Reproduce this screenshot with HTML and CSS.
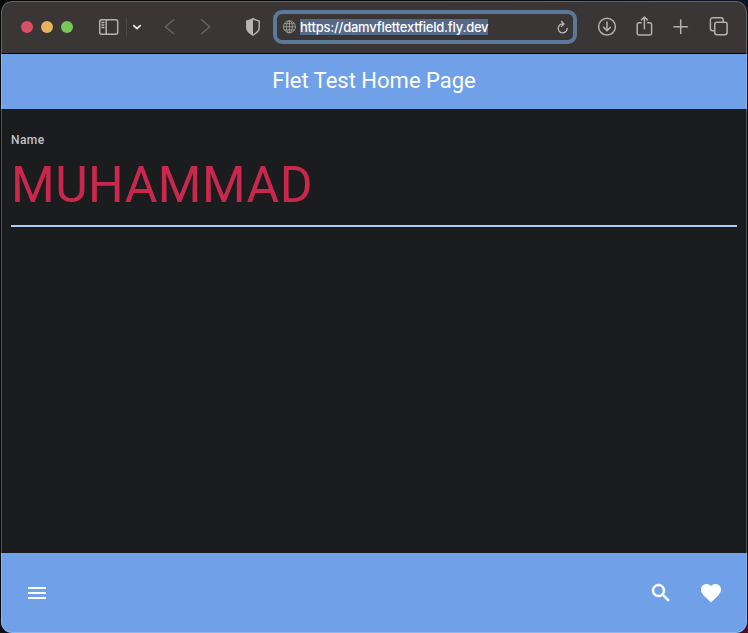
FILE: index.html
```html
<!DOCTYPE html>
<html lang="en">
<head>
<meta charset="utf-8">
<title>Flet Test Home Page</title>
<link rel="stylesheet" href="styles.css">
</head>
<body>
<div class="window">
  <header class="toolbar">
    <div class="lights"><i class="light close"></i><i class="light minimize"></i><i class="light zoom"></i></div>
    <svg class="icon sidebar" viewBox="0 0 24 24"><rect x="2.700" y="4.700" width="18" height="14.600" rx="2"/><path d="M9.200 5v14M4.900 7.600h2M4.900 10h2M4.900 12.400h2"/></svg>
    <span class="divider"></span>
    <svg class="icon chevron" viewBox="0 0 12 24"><path d="M2.800 10.700 6 13.600l3.200-2.900"/></svg>
    <svg class="icon dim back" viewBox="0 0 24 24"><path d="m15.700 4.800-8.300 7 8.300 7"/></svg>
    <svg class="icon dim forward" viewBox="0 0 24 24"><path d="m7.500 4.800 8.300 7-8.300 7"/></svg>
    <svg class="icon shield" viewBox="0 0 24 24"><path d="M12 3.600c2 1.400 4 2.100 6.200 2.300v6.700c0 3.600-2.500 5.600-6.200 7.400-3.700-1.800-6.200-3.800-6.200-7.400V5.900C8 5.700 10 5 12 3.600z"/><path class="fill" d="M12 3.600c-2 1.400-4 2.100-6.200 2.300v6.700c0 3.600 2.500 5.600 6.200 7.400z"/></svg>
    <div class="address">
      <svg class="globe" viewBox="0 0 14 14"><circle cx="7.400" cy="6.800" r="6"/><ellipse cx="7.400" cy="6.800" rx="3" ry="6"/><path d="M7.400 .8v12M1.400 6.800h12M2.400 3.700h10M2.400 9.900h10"/></svg>
      <span class="url">https://damvflettextfield.fly.dev</span>
      <svg class="reload" viewBox="0 0 14 14"><path d="M7 3.900A4.500 4.500 0 1 0 11.200 8.300M5.500 1.500 8 4 5.500 6.400"/></svg>
    </div>
    <svg class="icon download" viewBox="0 0 24 24"><circle cx="12" cy="11.700" r="8.400"/><path d="M12 7v8.500M8.700 12.400l3.300 3.300 3.300-3.300"/></svg>
    <svg class="icon share" viewBox="0 0 24 24"><path d="M9.200 7.700H7a1.800 1.800 0 0 0-1.800 1.800v8.800A1.800 1.800 0 0 0 7 20.100h10.800a1.800 1.800 0 0 0 1.800-1.800V9.500a1.800 1.800 0 0 0-1.800-1.800h-2.200M12.400 13.800V2.200M9.500 4.900l2.900-2.900 2.900 2.900"/></svg>
    <svg class="icon plus" viewBox="0 0 24 24"><path d="M11.700 5v13.500M5 11.700h13.500"/></svg>
    <svg class="icon tabs" viewBox="0 0 24 24"><rect x="7.700" y="7.300" width="12.400" height="12.400" rx="2.200"/><path d="M7.500 15.700H5.600a2.200 2.200 0 0 1-2.200-2.200V5a2.200 2.200 0 0 1 2.200-2.200h8.400A2.200 2.200 0 0 1 16.200 5v2"/></svg>
  </header>
  <h1 class="appbar">Flet Test Home Page</h1>
  <main class="page">
    <div class="field">
      <span class="label">Name</span>
      <span class="value">MUHAMMAD</span>
    </div>
  </main>
  <footer class="bottombar">
    <svg viewBox="0 0 24 24"><path d="M3 18h18v-2H3v2zm0-5h18v-2H3v2zm0-7v2h18V6H3z"/></svg>
    <svg class="search" viewBox="0 0 24 24"><path d="M15.500 14h-.79l-.28-.27A6.471 6.471 0 0 0 16 9.500 6.500 6.500 0 1 0 9.500 16c1.610 0 3.090-.59 4.230-1.570l.27.28v.79l5 4.990L20.490 19l-4.990-5zm-6 0C7.010 14 5 11.990 5 9.500S7.010 5 9.500 5 14 7.010 14 9.500 11.990 14 9.500 14z"/></svg>
    <svg class="heart" viewBox="0 0 24 24"><path d="m12 21.350-1.450-1.320C5.400 15.360 2 12.280 2 8.500 2 5.420 4.420 3 7.500 3c1.740 0 3.410.81 4.500 2.090C13.090 3.810 14.760 3 16.500 3 19.580 3 22 5.420 22 8.500c0 3.780-3.400 6.860-8.550 11.540L12 21.350z"/></svg>
  </footer>
</div>
</body>
</html>
```
FILE: styles.css
```css
* { box-sizing: border-box; }
body {
  margin: 0;
  padding: 1px 1px 0;
  height: 633px;
  overflow: hidden;
  background: linear-gradient(90deg, #050608 60%, #0b1526 100%) top / 100% 40px no-repeat,
    linear-gradient(90deg, #101112 50%, #4a0a20 50%) bottom / 100% 14px no-repeat, #08090b;
  font-family: Roboto, sans-serif;
}
svg { display: block; flex: none; }
.window {
  position: relative;
  display: flex;
  flex-direction: column;
  height: 632px;
  border-radius: 11px;
  overflow: hidden;
  background: #1b1c1e;
}
.window::after {
  content: "";
  position: absolute;
  inset: 0;
  border: 1px solid rgba(255, 255, 255, .23);
  border-radius: 11px;
}
.toolbar {
  display: flex;
  align-items: center;
  height: 53px;
  flex: none;
  padding-left: 20px;
  background: #3a3635;
  border-bottom: 1px solid #000;
}
.lights { display: flex; gap: 8px; }
.light { width: 12px; height: 12px; border-radius: 50%; }
.close { background: #d84f66; }
.minimize { background: #e5b45c; }
.zoom { background: #77c75b; }
.icon {
  width: 24px;
  height: 24px;
  fill: none;
  stroke: #b5b1b0;
  stroke-width: 1.5;
  stroke-linecap: round;
  stroke-linejoin: round;
}
.sidebar { margin-left: 24px; }
.divider { width: 1px; height: 18px; margin-left: 5px; background: #4c4847; }
.icon.chevron { width: 12px; margin-left: 4px; stroke: #e6e3e2; stroke-width: 1.8; }
.icon.dim { stroke: #676362; }
.back { margin-left: 15px; }
.forward { margin-left: 12px; }
.shield { margin-left: 23px; }
.shield .fill { fill: #b9b5b4; stroke: none; }
.address {
  display: flex;
  align-items: center;
  width: 304px;
  height: 34px;
  margin-left: 8px;
  padding: 0 3px 0 5px;
  border: 4px solid #5b7899;
  border-radius: 9px;
}
.globe { width: 14px; height: 14px; fill: none; stroke: #a19d9c; stroke-width: .9; }
.url {
  width: 188px;
  height: 16px;
  margin-left: 4px;
  background: #566986;
  color: #fff;
  font: 500 13px/16px Inter, sans-serif;
  letter-spacing: -.22px;
  white-space: nowrap;
}
.reload {
  width: 14px;
  height: 14px;
  margin-left: auto;
  fill: none;
  stroke: #bbb7b6;
  stroke-width: 1.3;
  stroke-linecap: round;
  stroke-linejoin: round;
}
.download { margin-left: 18px; }
.share { margin-left: 13px; }
.plus { margin-left: 13px; }
.tabs { margin-left: 14px; }
.appbar {
  height: 55px;
  flex: none;
  margin: 0;
  background: #70a0e8;
  color: #fff;
  font-size: 22px;
  font-weight: 400;
  line-height: 54px;
  text-align: center;
}
.page { flex: 1; padding: 22px 10px 0; }
.field {
  display: flex;
  flex-direction: column;
  height: 96px;
  border-bottom: 2px solid #a9cef4;
}
.label {
  color: #c0c3ca;
  font-size: 12px;
  font-weight: 500;
  line-height: 18px;
  letter-spacing: .4px;
}
.value {
  margin-top: 7px;
  color: #c9274b;
  font-size: 50px;
  line-height: 59px;
  letter-spacing: .5px;
}
.bottombar {
  display: flex;
  align-items: center;
  height: 80px;
  flex: none;
  padding: 0 24px;
  background: #70a0e8;
}
.bottombar svg { width: 24px; height: 24px; fill: #fff; }
.bottombar .search { margin-left: auto; stroke: #fff; stroke-width: .5; }
.heart { margin-left: 26px; }
```
